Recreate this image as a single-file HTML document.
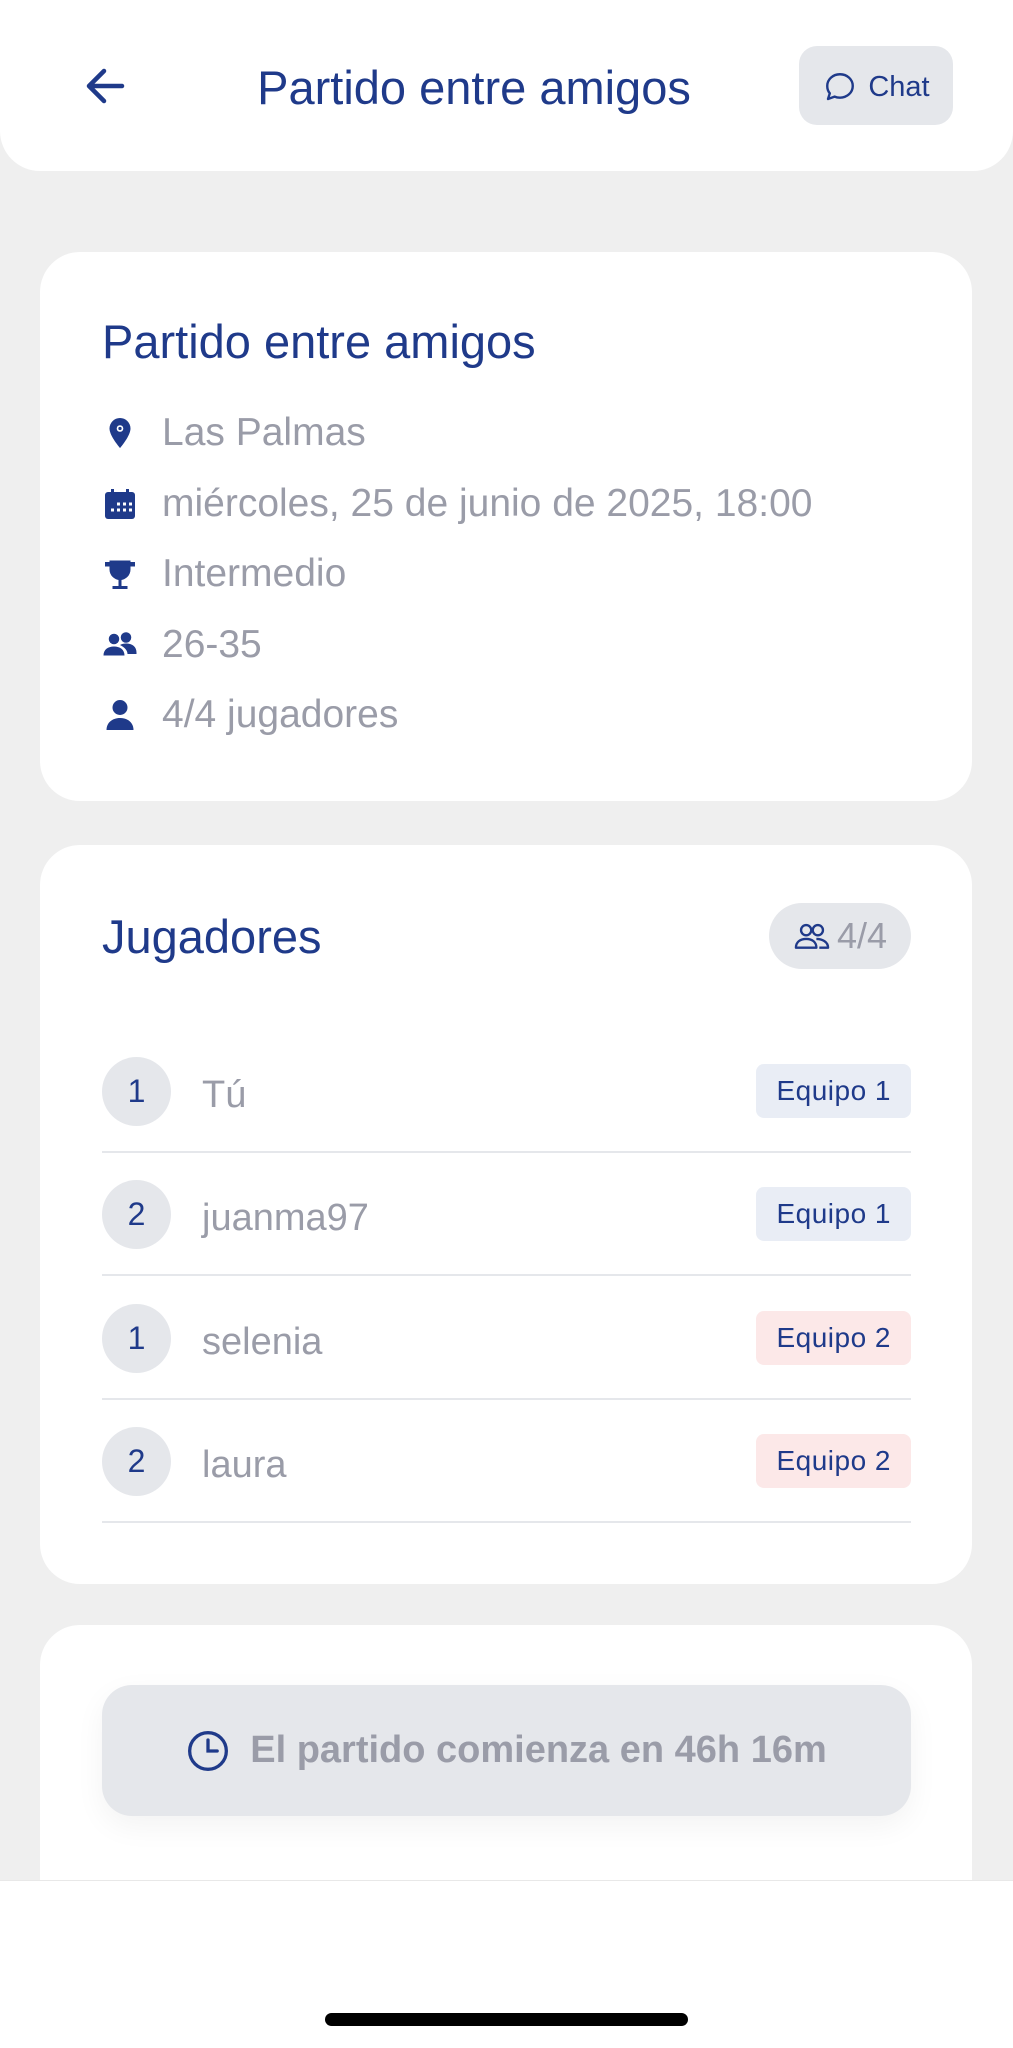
<!DOCTYPE html>
<html><head><meta charset="utf-8"><style>
*{margin:0;padding:0;box-sizing:border-box}
body{width:1013px;height:2048px;background:#efefef;font-family:"Liberation Sans",sans-serif;position:relative;overflow:hidden}
.blue{color:#1f3a8a}
.abs{position:absolute}
.card{position:absolute;left:40px;width:932px;background:#fff;border-radius:40px}
.row{position:absolute;left:102px;height:50px;display:flex;align-items:center}
.row svg{width:36px;height:36px;margin-right:24px}
.row span{font-size:39px;color:#9a9ca8}
.pl{position:absolute;left:102px;width:809px;height:123px;border-bottom:2px solid #e5e7eb}
.num{position:absolute;left:0;top:27px;width:69px;height:69px;border-radius:50%;background:#e5e7eb;color:#1f3a8a;font-size:32px;display:flex;align-items:center;justify-content:center}
.nm{position:absolute;left:100px;top:44px;font-size:38px;color:#9a9ca8}
.eq{position:absolute;right:0;top:34px;height:54px;padding:0 20px;border-radius:8px;font-size:28px;color:#1f3a8a;display:flex;align-items:center;letter-spacing:.5px}
.e1{background:#e9edf5}.e2{background:#fce8e8}
</style></head><body>
<div class="abs" style="left:0;top:-40px;width:1013px;height:211px;background:#fff;border-radius:40px"></div>
<svg class="abs" style="left:84px;top:66px" width="42" height="40" viewBox="0 0 42 40"><path d="M38 20H5M20 5L5 20l15 15" fill="none" stroke="#1f3a8a" stroke-width="4.5" stroke-linecap="round" stroke-linejoin="round"/></svg>
<div class="abs blue" style="left:0;width:948px;top:60px;text-align:center;font-size:47px">Partido entre amigos</div>
<div class="abs" style="left:799px;top:46px;width:154px;height:79px;background:#e5e7eb;border-radius:18px;display:flex;align-items:center;justify-content:center;padding-top:3px">
<svg width="36" height="36" viewBox="0 0 24 24" style="margin-right:10px"><path d="M12 3.5c4.7 0 8.5 3.4 8.5 7.8s-3.8 7.8-8.5 7.8c-1.3 0-2.5-.2-3.6-.7L4 20l1.2-3.8C4 14.8 3.5 13.1 3.5 11.3 3.5 6.9 7.3 3.5 12 3.5z" fill="none" stroke="#1f3a8a" stroke-width="1.6" stroke-linejoin="round"/></svg>
<span class="blue" style="font-size:29px">Chat</span></div>

<div class="card" style="top:252px;height:549px"></div>
<div class="abs blue" style="left:102px;top:314px;font-size:47px">Partido entre amigos</div>
<div class="row" style="top:408px"><svg viewBox="0 0 24 24"><path d="M12 2a7 7 0 0 0-7 7c0 5 7 13 7 13s7-8 7-13a7 7 0 0 0-7-7z" fill="#1f3a8a"/><circle cx="12" cy="9" r="2.2" fill="#fff"/><circle cx="12" cy="9" r="1.1" fill="#1f3a8a"/></svg><span>Las Palmas</span></div>
<div class="row" style="top:479px"><svg viewBox="0 0 24 24"><rect x="2" y="4" width="20" height="18" rx="2" fill="#1f3a8a"/><rect x="6" y="2" width="2" height="4" fill="#1f3a8a"/><rect x="16" y="2" width="2" height="4" fill="#1f3a8a"/><g fill="#fff"><rect x="10" y="11" width="2" height="2"/><rect x="14" y="11" width="2" height="2"/><rect x="18" y="11" width="2" height="2"/><rect x="6" y="15" width="2" height="2"/><rect x="10" y="15" width="2" height="2"/><rect x="14" y="15" width="2" height="2"/><rect x="18" y="15" width="2" height="2"/></g></svg><span>miércoles, 25 de junio de 2025, 18:00</span></div>
<div class="row" style="top:549px"><svg viewBox="0 0 24 24"><path d="M5 3h14v6a7 7 0 0 1-14 0z M2 4h3v3H2z M19 4h3v3h-3z" fill="#1f3a8a"/><rect x="11" y="15" width="2" height="5" fill="#1f3a8a"/><rect x="7" y="20" width="10" height="2" fill="#1f3a8a"/></svg><span>Intermedio</span></div>
<div class="row" style="top:620px"><svg viewBox="0 0 24 24"><circle cx="8" cy="8" r="3.5" fill="#1f3a8a"/><circle cx="16" cy="7" r="3.5" fill="#1f3a8a"/><path d="M1 19c0-4 3-6 7-6s7 2 7 6z M12 12c1-.6 2.5-1 4-1 4 0 7 2 7 6v1h-6c0-2.5-2-4.5-5-6z" fill="#1f3a8a"/></svg><span>26-35</span></div>
<div class="row" style="top:690px"><svg viewBox="0 0 24 24"><circle cx="12" cy="7" r="5" fill="#1f3a8a"/><path d="M3 22c0-5 4-8 9-8s9 3 9 8z" fill="#1f3a8a"/></svg><span>4/4 jugadores</span></div>

<div class="card" style="top:845px;height:739px"></div>
<div class="abs blue" style="left:102px;top:909px;font-size:47px">Jugadores</div>
<div class="abs" style="left:769px;top:903px;width:142px;height:66px;background:#e5e7eb;border-radius:33px;display:flex;align-items:center;justify-content:center">
<svg width="38" height="34" viewBox="0 0 26 22" style="margin-right:6px"><circle cx="9" cy="7" r="3.5" fill="none" stroke="#1f3a8a" stroke-width="1.6"/><circle cx="17" cy="7" r="3.5" fill="none" stroke="#1f3a8a" stroke-width="1.6"/><path d="M2 19c0-4 3-6 7-6s7 2 7 6zM16 13c4 0 8 2 8 6h-6" fill="none" stroke="#1f3a8a" stroke-width="1.6" stroke-linejoin="round"/></svg>
<span style="font-size:36px;color:#9a9ca8">4/4</span></div>
<div class="pl" style="top:1030px"><div class="num">1</div><div class="nm">Tú</div><div class="eq e1">Equipo 1</div></div>
<div class="pl" style="top:1153px"><div class="num">2</div><div class="nm">juanma97</div><div class="eq e1">Equipo 1</div></div>
<div class="pl" style="top:1277px"><div class="num">1</div><div class="nm">selenia</div><div class="eq e2">Equipo 2</div></div>
<div class="pl" style="top:1400px"><div class="num">2</div><div class="nm">laura</div><div class="eq e2">Equipo 2</div></div>

<div class="card" style="top:1625px;height:300px"></div>
<div class="abs" style="left:102px;top:1685px;width:809px;height:131px;background:#e5e7eb;border-radius:30px;display:flex;align-items:center;justify-content:center;box-shadow:0 10px 30px rgba(0,0,0,.05)">
<svg width="44" height="44" viewBox="0 0 24 24" style="margin-right:20px"><circle cx="12" cy="12" r="10" fill="none" stroke="#1f3a8a" stroke-width="1.8"/><path d="M12 6v6h5" fill="none" stroke="#1f3a8a" stroke-width="1.8" stroke-linecap="round"/></svg>
<span style="font-size:38px;font-weight:bold;color:#9a9ca8">El partido comienza en 46h 16m</span></div>

<div class="abs" style="left:0;top:1880px;width:1013px;height:168px;background:#fff;border-top:1px solid #e8e8e8"></div>
<div class="abs" style="left:325px;top:2013px;width:363px;height:13px;border-radius:7px;background:#000"></div>
</body></html>
